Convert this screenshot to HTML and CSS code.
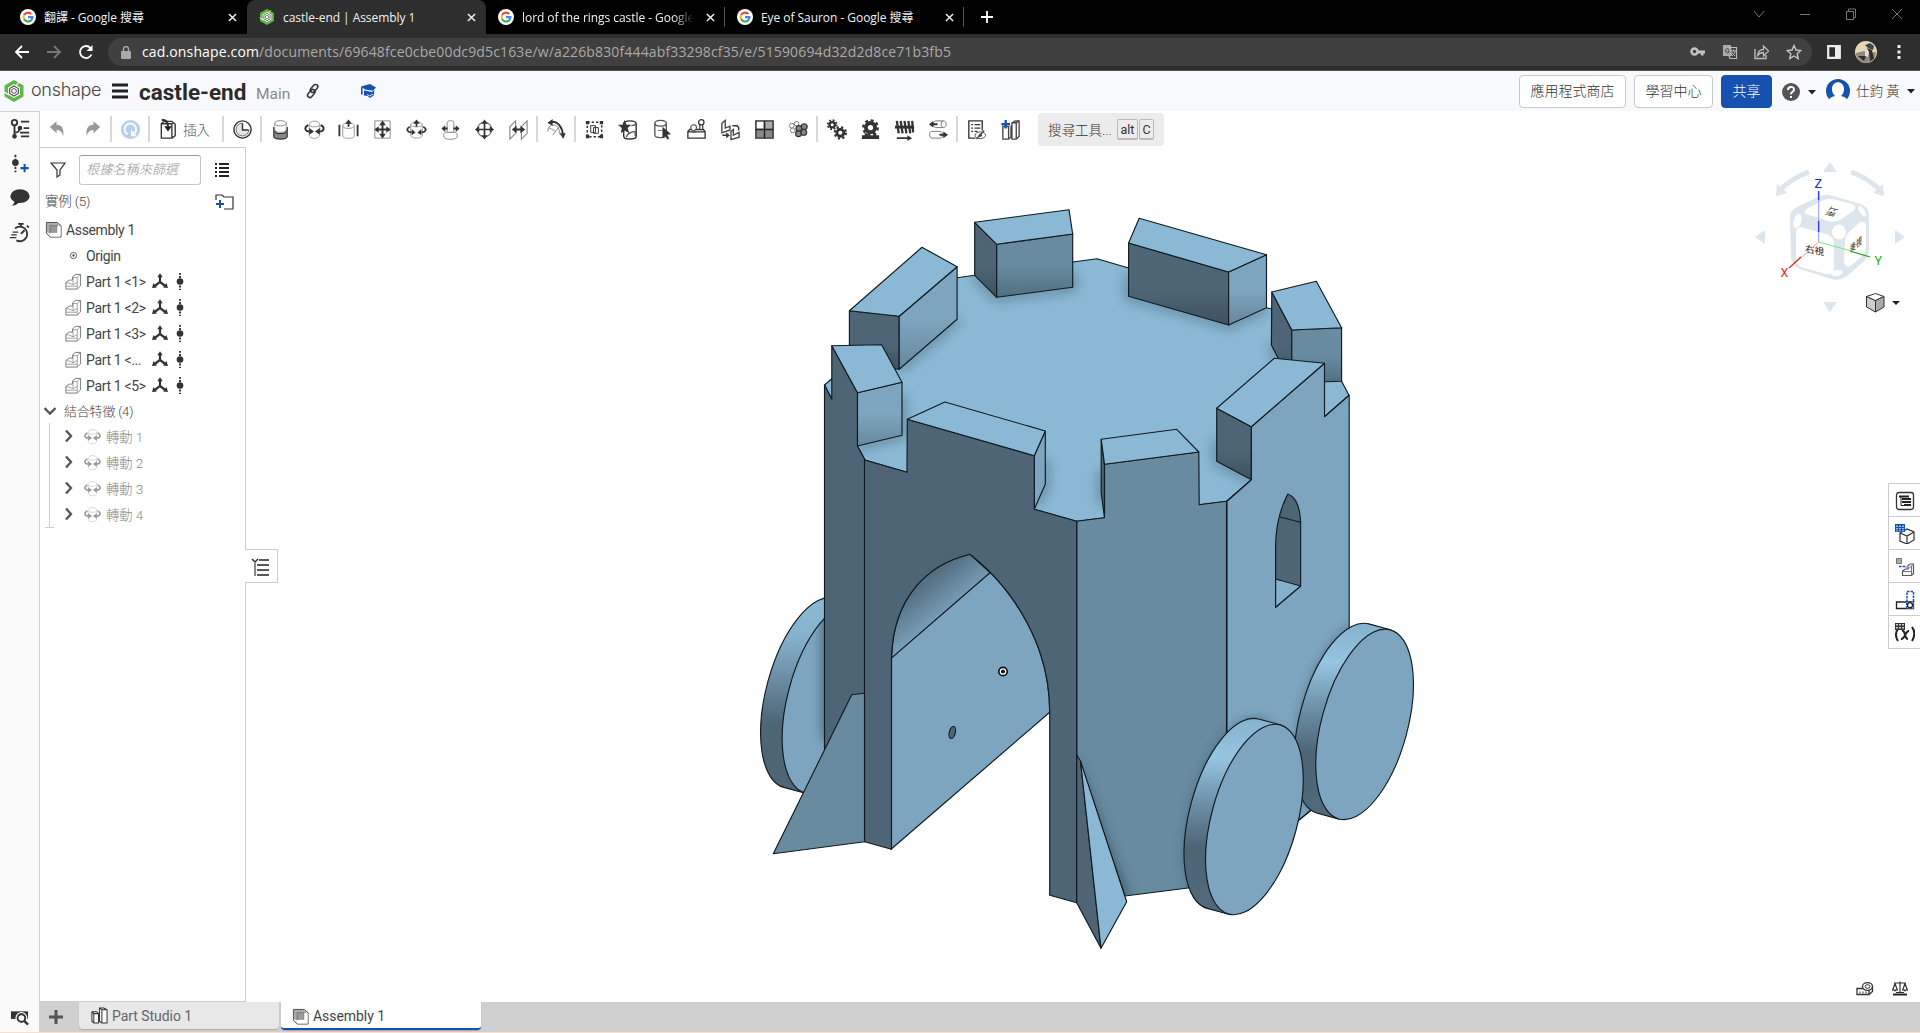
FILE: index.html
```html
<!DOCTYPE html>
<html lang="zh-Hant">
<head>
<meta charset="utf-8">
<title>castle-end | Assembly 1</title>
<link rel="stylesheet" href="styles.css">
</head>
<body>
<svg class="defs" width="0" height="0">
  <defs>
    <symbol id="google" viewBox="0 0 20 20"><circle cx="10" cy="10" r="10" fill="#fff"/><g fill="none" stroke-width="2.6"><path d="M14 6.2A5.6 5.6 0 0 0 5 7.6" stroke="#ea4335"/><path d="M5 7.6a5.6 5.6 0 0 0 0 4.8" stroke="#fbbc05"/><path d="M5 12.4a5.6 5.6 0 0 0 8.8 1.8" stroke="#34a853"/><path d="M13.8 14.2A5.5 5.5 0 0 0 15.6 10.2H10" stroke="#4285f4"/></g></symbol>
    <symbol id="hex" viewBox="0 0 20 22"><path d="M10 0l9.500 5.500v11L10 22 .5 16.500v-11z" fill="#5cb947"/><path d="M10 4l6 3.500v7L10 18l-6-3.500v-7z" fill="#fff"/><path d="M10 6l4.300 2.500v5L10 16l-4.300-2.500v-5z" fill="none" stroke="#555" stroke-width="1.200"/><path d="M10 8.500l2.200 1.200v2.600L10 13.500l-2.200-1.200V9.700z" fill="none" stroke="#555"/><path d="M0 12l5 3M15 2l-3 4" stroke="#fff" stroke-width="1.200"/></symbol>
    <symbol id="x" viewBox="0 0 10 10"><path d="M1 1l8 8M9 1L1 9" fill="none" stroke="currentColor" stroke-width="1.600"/></symbol>
    <symbol id="caret" viewBox="0 0 8 5"><path d="M0 0h8L4 4.500z" fill="#222"/></symbol>
    <symbol id="undo" viewBox="0 0 24 24"><path d="M4 9.500l7-6v3.500c6 0 8 4.500 7 12-1-4-3-6.500-7-6.500v3.500z" fill="#999"/></symbol>
    <symbol id="refresh" viewBox="0 0 24 24"><circle cx="12" cy="12" r="10" fill="#b8cfe8"/><path d="M9 17a6 6 0 1 1 6.500-.5" fill="none" stroke="#fff" stroke-width="2"/><path d="M12.500 12v7h6z" fill="#fff"/></symbol>
    <symbol id="insert" viewBox="0 0 24 24"><path d="M4.500 6h11v15h-11zM4.500 6l3-2.500h8l3.500 3v12L15.500 21M15.500 6l2-1" fill="none" stroke="#333" stroke-width="1.400"/><path d="M5 2c5 0 6.500 3 6.500 7" fill="none" stroke="#333" stroke-width="2.200"/><path d="M7.500 8.500h8L11.500 14z" fill="#222"/></symbol>
    <symbol id="clock" viewBox="0 0 24 24"><circle cx="12" cy="12" r="9" fill="#f2f2f2" stroke="#333" stroke-width="1.500"/><circle cx="12" cy="12" r="6.700" fill="#e4e4e4" stroke="#777"/><path d="M12 4v8.500h7.500A8 8 0 0 0 12 4z" fill="#fff"/><path d="M12 5.500v7h6.500" fill="none" stroke="#333" stroke-width="1.500"/></symbol>
    <symbol id="fasten" viewBox="0 0 24 24"><path d="M5 10v9c0 4 14 4 14 0v-9c-2 0-1 5-3 6h-8c-2-1-1-6-3-6z" fill="#888" stroke="#333" stroke-width="1.300"/><path d="M6 5v7c0 4 12 4 12 0V5" fill="#fff" stroke="#999"/><ellipse cx="12" cy="5.500" rx="6" ry="2.800" fill="#fff" stroke="#888"/></symbol>
    <symbol id="revolute" viewBox="0 0 24 24"><path d="M6.500 7c0-5 11-5 11 0v10.500c0 5-11 5-11 0z" fill="#fff" stroke="#999"/><path d="M6.500 7c0 3 11 3 11 0" fill="none" stroke="#999"/><path d="M5.500 7.500C.5 10 2 14 7 14M18.500 7.500c5 2.500 3.500 6.500-1.500 6.500" fill="none" stroke="#333" stroke-width="1.900"/><path d="M6.500 10.500v7l5-3.500zM17.500 10.500v7l-5-3.500z" fill="#333"/></symbol>
    <symbol id="slider" viewBox="0 0 24 24"><path d="M6 8v11c0 3 12 3 12 0V8" fill="#fff" stroke="#999"/><ellipse cx="12" cy="8" rx="6" ry="3" fill="#fff" stroke="#999"/><path d="M2.500 7v12M21.500 7v12M12 9V4" stroke="#333" stroke-width="1.900"/><path d="M8.500 6L12 1.500 15.500 6z" fill="#333"/></symbol>
    <symbol id="planar" viewBox="0 0 24 24"><path d="M4 3h16v18H4z" fill="#fff" stroke="#888"/><path d="M12 5v14M5 12h14" stroke="#333" stroke-width="2"/><path d="M8.500 7.500L12 2.500 15.500 7.500zM8.500 16.500l3.500 5 3.500-5zM8 8.500L3.500 12 8 15.500zM16 8.500l4.500 3.500-4.500 3.500z" fill="#333"/></symbol>
    <symbol id="cyl" viewBox="0 0 24 24"><path d="M6 7v11c0 4 12 4 12 0V7c0-4-12-4-12 0c0 3 12 3 12 0" fill="#fff" stroke="#999"/><path d="M12 9V4M5 9c-5 3-2 6 2 6M19 9c5 3 2 6-2 6" fill="none" stroke="#333" stroke-width="1.800"/><path d="M8.500 6L12 1.500 15.500 6zM7 11.500v6.500l4-3zM17 11.500v6.500l-4-3z" fill="#333"/></symbol>
    <symbol id="pin" viewBox="0 0 24 24"><path d="M8.500 5c0-3 7-3 7 0v10h-7z" fill="#fff" stroke="#888"/><path d="M5 17c0-2 3-2 3.500-2h7c.5 0 3.500 0 3.500 2v3c-2 3-12 3-14 0z" fill="#fff" stroke="#888"/><path d="M9 11H5M15 11h4" stroke="#333" stroke-width="2"/><path d="M6.500 7.500v7L2.500 11zM17.500 7.500v7l4-3.500z" fill="#333"/></symbol>
    <symbol id="ball" viewBox="0 0 24 24"><circle cx="12" cy="12" r="7.500" fill="#fff" stroke="#777" stroke-width="1.300"/><path d="M12 4v16M4 12h16" stroke="#333" stroke-width="1.800"/><path d="M8.500 6L12 1.500 15.500 6zM8.500 18l3.500 4.500 3.500-4.500zM6.500 8.500L2 12l4.500 3.500zM17.500 8.500L22 12l-4.500 3.500z" fill="#333"/></symbol>
    <symbol id="parallel" viewBox="0 0 24 24"><path d="M3 9l6-6v13l-6 6zM15 9l6-6v13l-6 6z" fill="#fff" stroke="#888" stroke-width="1.200"/><path d="M7 12h10" stroke="#333" stroke-width="2.200"/><path d="M10 8v8l-5-4zM14 8v8l5-4z" fill="#333"/></symbol>
    <symbol id="tangent" viewBox="0 0 24 24"><path d="M3 14c0-7 6-9 11-4l-6 8M14 10l2 8M4 10l7 4" fill="none" stroke="#888"/><path d="M6 4c8-1 12 6 13 14" fill="none" stroke="#333" stroke-width="1.900"/><path d="M8 1v7L2.500 5zM15.500 16h6L19 22z" fill="#333"/></symbol>
    <symbol id="group" viewBox="0 0 24 24"><path d="M4.500 4.500h15v15h-15z" fill="none" stroke="#333" stroke-width="1.600" stroke-dasharray="2.500 2"/><path d="M3 3h3.500v3.500H3zM17.500 3H21v3.500h-3.500zM3 17.500h3.500V21H3zM17.500 17.500H21V21h-3.500z" fill="#333"/><path d="M8 8h5v7H8zM11 10h5v6h-5z" fill="#fff" stroke="#333"/></symbol>
    <symbol id="snap" viewBox="0 0 24 24"><path d="M7 6v13c0 4 13 4 13 0V6c0-4-13-4-13 0" fill="#fff" stroke="#333" stroke-width="1.500"/><path d="M15 8c3 0 4-1 5-2M10 20c0-4 8-7 9-5v4" fill="none" stroke="#555" stroke-width="1.400"/><path d="M8 2l2 5h5l-4 3.500 2 5.500-5-3-4 3 1-5.500-4-3.500h5z" fill="#333"/></symbol>
    <symbol id="select" viewBox="0 0 24 24"><path d="M4 5.500v12c0 4 12 4 12 0v-12" fill="#fff" stroke="#555" stroke-width="1.400"/><ellipse cx="10" cy="5.500" rx="6" ry="3" fill="#fff" stroke="#555" stroke-width="1.400"/><path d="M7 13h6v5" fill="none" stroke="#777"/><path d="M12 9l9 8-4 .5 2 4-2 1-2-4-3 3z" fill="#333"/></symbol>
    <symbol id="mateconn" viewBox="0 0 24 24"><path d="M3 14l2-2h14l2 2v7H3zM3 14.500h18" fill="#fff" stroke="#333" stroke-width="1.400"/><circle cx="9" cy="10" r="3" fill="#fff" stroke="#555" stroke-width="1.200"/><path d="M7 13.500c0 2 5 2 5 0" fill="none" stroke="#555"/><path d="M15.500 6v6h3V6" fill="#fff" stroke="#333" stroke-width="1.200"/><circle cx="17" cy="4.500" r="2.800" fill="#fff" stroke="#333" stroke-width="1.300"/></symbol>
    <symbol id="pattern" viewBox="0 0 24 24"><path d="M3 5.500l3.500-3v8l5-2v4l-8.500 3zM12.500 14l2.500-2v6l6-3v5l-8.500 2.500z" fill="#fff" stroke="#444" stroke-width="1.400"/><path d="M14 8h5l1.500 2v3M3.500 18H8" fill="none" stroke="#333" stroke-width="1.500"/><path d="M7.500 15v6l4-3z" fill="#333"/></symbol>
    <symbol id="grid" viewBox="0 0 24 24"><path d="M3 3h18v18H3z" fill="#888" stroke="#333" stroke-width="1.500"/><path d="M4 4h7v7H4z" fill="#fff"/><path d="M13 4h7v7h-7z" fill="#aaa"/><path d="M12 3v18M3 12h18" stroke="#222" stroke-width="1.500"/></symbol>
    <symbol id="balls" viewBox="0 0 24 24"><g fill="#fff" stroke="#777"><circle cx="5" cy="8" r="2.500"/><circle cx="10" cy="6" r="2.500"/><circle cx="6" cy="13" r="2.500"/></g><g fill="#888" stroke="#333" stroke-width="1.300"><circle cx="12.500" cy="11" r="3"/><circle cx="18" cy="9" r="3"/><circle cx="12" cy="16.500" r="3"/><circle cx="17.500" cy="15" r="3"/></g></symbol>
    <symbol id="gears" viewBox="0 0 24 24"><g fill="none" stroke="#333"><circle cx="7.500" cy="7" r="2.800" stroke-width="2.400"/><circle cx="7.500" cy="7" r="4.600" stroke-width="2" stroke-dasharray="1.900 1.710"/><circle cx="16" cy="15.500" r="3.600" stroke-width="3"/><circle cx="16" cy="15.500" r="5.800" stroke-width="2.400" stroke-dasharray="2.300 2.255"/></g></symbol>
    <symbol id="rack" viewBox="0 0 24 24"><circle cx="12" cy="10" r="4.800" fill="#fff" stroke="#333" stroke-width="4"/><circle cx="12" cy="10" r="7.600" fill="none" stroke="#333" stroke-width="2.400" stroke-dasharray="3 2.970"/><path d="M3 18h3v-2h3v2h6v-2h3v2h3v4H3z" fill="#333"/></symbol>
    <symbol id="screw" viewBox="0 0 24 24"><path d="M2 9.500h20" stroke="#333" stroke-width="3"/><path d="M4 3l2 13M8 3l2 13M12 3l2 13M16 3l2 13M20 3l1 12" stroke="#333" stroke-width="2.400"/><path d="M4 21h12" stroke="#333" stroke-width="1.800"/><path d="M15 18l5 3-5 3z" fill="#333"/></symbol>
    <symbol id="linear" viewBox="0 0 24 24"><path d="M9 3h8c4 0 4 7 0 7H9c-3 0-3-7 0-7zM17 3c-3 0-3 7 0 7M5 14h9c3 0 3 7 0 7H5c-3 0-3-7 0-7z" fill="#fff" stroke="#777"/><path d="M5 6.500h6M13 17.500h5" stroke="#333" stroke-width="2"/><path d="M6.500 3v7L2 6.500zM17 14v7l5-3.500z" fill="#333"/></symbol>
    <symbol id="bom" viewBox="0 0 24 24"><path d="M11 21H4V3h14v10" fill="#fff" stroke="#333" stroke-width="1.400"/><path d="M6.500 7h2M10 7h6M6.500 10.500h2M10 10.500h6M6.500 14h2M10 14h3" stroke="#333" stroke-width="1.300"/><ellipse cx="16" cy="18" rx="5.500" ry="3.500" fill="#fff" stroke="#555"/><circle cx="16" cy="18" r="1.800" fill="#555"/><path d="M12 22l8-9" stroke="#444" stroke-width="1.400"/></symbol>
    <symbol id="addpart" viewBox="0 0 24 24"><path d="M4 9h6v13H4zM10 22l2.500-2V8M13.500 5l3.500-2h4v16l-3 3h-4.500zM13.500 5H18v17M18 5l3-2" fill="#fff" stroke="#444" stroke-width="1.400"/><path d="M7 2v9M2.500 6.500h9" stroke="#1651b0" stroke-width="2.400"/></symbol>
    <symbol id="tree" viewBox="0 0 24 24"><g fill="none" stroke="#333" stroke-width="2"><circle cx="6" cy="5" r="3"/><path d="M6 8v11M6 16c6 0 5-3 5-6M13 4h9M16 11h6M13 20h9M12 16h10"/></g><circle cx="6" cy="20" r="2.500" fill="#333"/><circle cx="12" cy="11" r="2.500" fill="#333"/></symbol>
    <symbol id="mdot" viewBox="0 0 8 20"><path d="M4 1v18" stroke="#333" stroke-width="2" stroke-dasharray="2 1.300"/><circle cx="4" cy="10" r="3.500" fill="#333"/></symbol>
    <symbol id="asm" viewBox="0 0 18 18"><path d="M1.500 1.500h11.500l4 3.500v12H5.500l-4-4z" fill="#eee" stroke="#444"/><path d="M2 2h10.500l3.500 3H6v8L2 12z" fill="#aaa"/><path d="M5.500 5h7.500v7.500H5.500z" fill="#999" stroke="#666" stroke-width=".8"/><path d="M13 5.500h3.500v11H6v-4h7z" fill="#fff"/></symbol>
    <symbol id="part" viewBox="0 0 18 18"><path d="M1 10l3.500-2.500H8V4l3-2.500h5.500v12L13 17H1z" fill="#fff" stroke="#777"/><path d="M1 10.500h3l4.500 2V4.500l4.500 .5 3.500-3.500M13 5v12M1 14l12 0M8.500 12.500l4.500-2.500" fill="none" stroke="#888" stroke-width=".8"/></symbol>
    <symbol id="axes" viewBox="0 0 16 16"><path d="M8 2v7L2 13.500M8 9l6 4.500" fill="none" stroke="#333" stroke-width="2.200"/><path d="M5.300 4.200L8 .3 10.700 4.200zM0 15l1.500-5 3.500 4.500zM16 15l-1.500-5-3.500 4.500z" fill="#333"/></symbol>
    <symbol id="chev" viewBox="0 0 12 12"><path d="M3 .5L8 6l-5 5.500" fill="none" stroke="#555" stroke-width="2.300"/></symbol>
    <symbol id="studio" viewBox="0 0 18 18"><path d="M1 5h5l2 2v10H3l-2-2zM1 5l2 2h5M3 7v10M9 1h4.500L17 3v14h-5.500L9 15zM9 1l2.500 2H17M11.500 3v14" fill="#fff" stroke="#333" stroke-width="1.100"/></symbol>
  </defs>
</svg>

<div class="tabstrip">
  <div class="tab"><svg class="fav"><use href="#google"/></svg><span>翻譯 - Google 搜尋</span><svg class="close"><use href="#x"/></svg></div>
  <div class="tab active"><svg class="fav"><use href="#hex"/></svg><span>castle-end | Assembly 1</span><svg class="close"><use href="#x"/></svg></div>
  <div class="tab ruled"><svg class="fav"><use href="#google"/></svg><span class="fade">lord of the rings castle - Google</span><svg class="close"><use href="#x"/></svg></div>
  <div class="tab ruled"><svg class="fav"><use href="#google"/></svg><span>Eye of Sauron - Google 搜尋</span><svg class="close"><use href="#x"/></svg></div>
  <svg class="newtab" viewBox="0 0 12 12"><path d="M6 0v12M0 6h12" stroke="#fff" stroke-width="1.800"/></svg>
  <div class="winctl">
    <svg viewBox="0 0 12 12"><path d="M1 3l5 6 5-6"/></svg>
    <svg viewBox="0 0 12 12"><path d="M1 6.500h10"/></svg>
    <svg viewBox="0 0 12 12"><path d="M1.500 3.500h7v8h-7zM3.500 3V1h7v8.500H9"/></svg>
    <svg viewBox="0 0 12 12"><path d="M1 1l10 10M11 1L1 11"/></svg>
  </div>
</div>

<div class="navbar">
  <svg class="nav" viewBox="0 0 16 16"><path d="M15 8H2M8 2L2 8l6 6" stroke="#fff"/></svg>
  <svg class="nav" viewBox="0 0 16 16"><path d="M1 8h13M8 2l6 6-6 6" stroke="#777"/></svg>
  <svg class="nav" viewBox="0 0 16 16"><path d="M13.500 10.500A6 6 0 1 1 12.500 4" stroke="#fff"/><path d="M14.500 1v6h-6z" fill="#fff" stroke="none"/></svg>
  <div class="omni">
    <svg width="10" height="13" viewBox="0 0 10 13"><rect y="5" width="10" height="8" rx="1" fill="#aaa"/><path d="M2.500 5V3a2.500 2.500 0 0 1 5 0v2" fill="none" stroke="#aaa" stroke-width="1.400"/></svg>
    <span class="url"><b>cad.onshape.com</b>/documents/69648fce0cbe00dc9d5c163e/w/a226b830f444abf33298cf35/e/51590694d32d2d8ce71b3fb5</span>
    <div class="omniicons">
      <svg viewBox="0 0 16 16"><circle cx="4.500" cy="7.500" r="3" fill="none" stroke="#c4c4c4" stroke-width="2.400"/><path d="M8 6.500h7v3h-1.500v2h-2.500v-2H8z" fill="#c4c4c4"/></svg>
      <svg viewBox="0 0 16 16"><path d="M1 1h8l1 11H1z" fill="#aaa"/><path d="M6 3.500h8.500v11H8l-1-2.500" fill="none" stroke="#bbb" stroke-width="1.200"/><path d="M7 5.500A2 2 0 1 0 7 8V7H5.500" fill="none" stroke="#444"/><path d="M9 7h5M11.500 5.500V7M13 7c-.5 3-2 4-3 5M10 9l3 3" stroke="#bbb" fill="none"/></svg>
      <svg viewBox="0 0 16 16"><path d="M1 5v9.500h11V11" fill="none" stroke="#bbb" stroke-width="1.400"/><path d="M3.500 11.500C4 7 7 5.500 9.500 5.500V2l5 5-5 5V8.500c-3 0-4.500 1-6 3z" fill="none" stroke="#bbb" stroke-width="1.300"/></svg>
      <svg viewBox="0 0 16 16"><path d="M8 1.500l2 4.500 4.800.5-3.600 3.200 1 4.800L8 12l-4.200 2.500 1-4.800L1.200 6.500 6 6z" fill="none" stroke="#c4c4c4" stroke-width="1.400"/></svg>
    </div>
  </div>
  <svg class="side" viewBox="0 0 14 14"><path d="M1.200 1.200h11.600v11.600H1.200z" fill="none" stroke="#eee" stroke-width="2.200"/><path d="M8 1h5v12H8z" fill="#eee"/></svg>
  <svg class="face" viewBox="0 0 22 22"><circle cx="11" cy="11" r="11" fill="#e8d7b4"/><path d="M1 12l8-2 5 2 7-1c0 6-4 11-10 11S1 17 1 12z" fill="#8c8a84"/><path d="M10 4l5-2 4 3-1 4-5-2z" fill="#37474b"/><path d="M12 7l5 2 2 9-4 2-1-9zM3 15h8l-2 5z" fill="#3a2a28"/><path d="M10 10l4 1-1 5-3-1z" fill="#ddd"/></svg>
  <svg class="dots" viewBox="0 0 4 16"><path d="M.5 1h3v3h-3zM.5 6.500h3v3h-3zM.5 12h3v3h-3z" fill="#eee"/></svg>
</div>

<header class="header">
  <svg class="logo"><use href="#hex"/></svg>
  <span class="brand">onshape</span>
  <svg class="burger" viewBox="0 0 16 16"><path d="M0 2h16M0 8h16M0 14h16" stroke="#222" stroke-width="2.800"/></svg>
  <h1>castle-end</h1><span class="ws">Main</span>
  <svg class="link" viewBox="0 0 16 16"><g fill="none" stroke="#333" stroke-width="1.500"><rect x="6.800" y=".8" width="4.600" height="9" rx="2.300" transform="rotate(40 9 5.300)"/><rect x="4" y="6" width="4.600" height="9" rx="2.300" transform="rotate(40 6.300 10.500)"/></g></svg>
  <svg class="cap" viewBox="0 0 16 16"><path d="M1 3.500L10 1l6 3.500-3 3.300-8-1.300z" fill="#1651b0"/><path d="M1.800 4v7.500" stroke="#1651b0" stroke-width="1.600"/><path d="M4 7.500l8 1.400 2.500-2-.8 5.600L10 15l-2.500-2L4 12.500z" fill="#1651b0"/><path d="M7 11.500l2.500 1.500 3.500-2" fill="none" stroke="#f8f9fc" stroke-width=".9"/></svg>
  <div class="actions">
    <button class="btn store">應用程式商店</button>
    <button class="btn learn">學習中心</button>
    <button class="btn share">共享</button>
    <svg class="help" viewBox="0 0 18 18"><circle cx="9" cy="9" r="9" fill="#555"/><path d="M6 7c0-4 6-4 6-.5C12 9 9 8.500 9 11.200" fill="none" stroke="#fff" stroke-width="2"/><path d="M8 13h2v2H8z" fill="#fff"/></svg>
    <svg class="caret"><use href="#caret"/></svg>
    <svg class="user" viewBox="0 0 24 24"><circle cx="12" cy="12" r="12" fill="#1651b0"/><path d="M6 10c0-9 12-9 12 0 0 4-2 6-3 7 4 1 6 2 6 5-4 3-14 3-18 0 0-3 2-4 6-5-1-1-3-3-3-7z" fill="#fff"/></svg>
    <span class="uname">仕鈞 黃</span>
    <svg class="caret last"><use href="#caret"/></svg>
  </div>
</header>

<div class="workspace">
  <nav class="rail">
    <svg class="i22"><use href="#tree"/></svg>
    <svg class="i22" viewBox="0 0 24 24"><path d="M7 2v19" stroke="#333" stroke-width="2" stroke-dasharray="2.500 1.800"/><circle cx="7" cy="10.500" r="3.600" fill="#333"/><path d="M17 12v9M12.500 16.500h9" stroke="#1651b0" stroke-width="2.200"/></svg>
    <svg class="i22" viewBox="0 0 24 24"><ellipse cx="12" cy="10" rx="10.500" ry="7.500" fill="#333"/><path d="M3 20c3-1 3-4 3-6l5 3c-2 2-5 4-8 3z" fill="#333"/></svg>
    <svg class="i22" viewBox="0 0 24 24"><path d="M6.500 7A8 8 0 1 1 8 20M10 2h6M13 2v3M19.500 4l2 2M13 13l4-4" fill="none" stroke="#333" stroke-width="2"/><path d="M4 11h6M2.500 14h6M1 17h7" stroke="#333" stroke-width="1.200"/></svg>
    <svg class="search" viewBox="0 0 20 18"><path d="M1 2h18v8H1z" fill="#333"/><circle cx="12" cy="9" r="5.500" fill="#333" stroke="#fff" stroke-width="1.500"/><circle cx="12" cy="9" r="4" fill="#fff" stroke="#333" stroke-width="2"/><path d="M15 12l4 4" stroke="#333" stroke-width="2.400"/></svg>
  </nav>
  <div class="stage">
    <div class="tools">
      <i><svg><use href="#undo"/></svg></i><i class="flip"><svg><use href="#undo"/></svg></i><b></b>
      <i><svg><use href="#refresh"/></svg></i><b></b>
      <i class="ins"><svg><use href="#insert"/></svg><span>插入</span></i><b></b>
      <i><svg><use href="#clock"/></svg></i><b></b>
      <i><svg><use href="#fasten"/></svg></i><i><svg><use href="#revolute"/></svg></i><i><svg><use href="#slider"/></svg></i><i><svg><use href="#planar"/></svg></i><i><svg><use href="#cyl"/></svg></i><i><svg><use href="#pin"/></svg></i><i><svg><use href="#ball"/></svg></i><i><svg><use href="#parallel"/></svg></i><b></b>
      <i><svg><use href="#tangent"/></svg></i><b></b>
      <i><svg><use href="#group"/></svg></i><i><svg><use href="#snap"/></svg></i><i><svg><use href="#select"/></svg></i><i><svg><use href="#mateconn"/></svg></i><i><svg><use href="#pattern"/></svg></i><i><svg><use href="#grid"/></svg></i><i><svg><use href="#balls"/></svg></i><b></b>
      <i><svg><use href="#gears"/></svg></i><i><svg><use href="#rack"/></svg></i><i><svg><use href="#screw"/></svg></i><i><svg><use href="#linear"/></svg></i><b></b>
      <i><svg><use href="#bom"/></svg></i><i><svg><use href="#addpart"/></svg></i>
      <div class="find"><span>搜尋工具...</span><kbd>alt</kbd><kbd>C</kbd></div>
    </div>
    <div class="middle">
      <aside class="panel">
        <div class="filter">
          <svg width="16" height="16" viewBox="0 0 16 16"><path d="M1 1h14l-5 7v5l-3 2V8z" fill="none" stroke="#333" stroke-width="1.200"/></svg>
          <div class="field">根據名稱來篩選</div>
          <svg width="14" height="14" viewBox="0 0 14 14"><path d="M0 1h2M4 1h10M0 5h2M4 5h10M0 9h2M4 9h10M0 13h2M4 13h10" stroke="#222" stroke-width="1.800"/></svg>
        </div>
        <div class="row head"><span>實例 (5)</span><svg width="19" height="16" viewBox="0 0 19 16"><path d="M1 6V1h6l2 2h9v12H9" fill="none" stroke="#333" stroke-width="1.200"/><path d="M5 6v8M1 10h8" stroke="#1651b0" stroke-width="2"/></svg></div>
        <div class="row asm"><svg class="i17"><use href="#asm"/></svg><span>Assembly 1</span></div>
        <div class="row lv"><svg class="i17" viewBox="0 0 18 18"><circle cx="9" cy="9" r="3.300" fill="none" stroke="#555"/><circle cx="9" cy="9" r="1.200" fill="#444"/></svg><span>Origin</span></div>
        <div class="row lv"><svg class="i17"><use href="#part"/></svg><span>Part 1 &lt;1&gt;</span><svg class="ax"><use href="#axes"/></svg><svg class="md"><use href="#mdot"/></svg></div>
        <div class="row lv"><svg class="i17"><use href="#part"/></svg><span>Part 1 &lt;2&gt;</span><svg class="ax"><use href="#axes"/></svg><svg class="md"><use href="#mdot"/></svg></div>
        <div class="row lv"><svg class="i17"><use href="#part"/></svg><span>Part 1 &lt;3&gt;</span><svg class="ax"><use href="#axes"/></svg><svg class="md"><use href="#mdot"/></svg></div>
        <div class="row lv"><svg class="i17"><use href="#part"/></svg><span>Part 1 &lt;...</span><svg class="ax"><use href="#axes"/></svg><svg class="md"><use href="#mdot"/></svg></div>
        <div class="row lv"><svg class="i17"><use href="#part"/></svg><span>Part 1 &lt;5&gt;</span><svg class="ax"><use href="#axes"/></svg><svg class="md"><use href="#mdot"/></svg></div>
        <div class="row mates"><svg class="down" viewBox="0 0 12 12"><path d="M.5 3L6 8.500 11.500 3" fill="none" stroke="#555" stroke-width="2.300"/></svg><span>結合特徵 (4)</span></div>
        <div class="kids">
          <div class="row"><svg class="chev"><use href="#chev"/></svg><svg class="rv"><use href="#revolute"/></svg><span>轉動 1</span></div>
          <div class="row"><svg class="chev"><use href="#chev"/></svg><svg class="rv"><use href="#revolute"/></svg><span>轉動 2</span></div>
          <div class="row"><svg class="chev"><use href="#chev"/></svg><svg class="rv"><use href="#revolute"/></svg><span>轉動 3</span></div>
          <div class="row"><svg class="chev"><use href="#chev"/></svg><svg class="rv"><use href="#revolute"/></svg><span>轉動 4</span></div>
        </div>
      </aside>
      <main class="canvas">
        <svg class="model" viewBox="246 147 1674 855">
          <defs>
            <linearGradient id="rim" x1="0" y1="0" x2="0" y2="1"><stop offset="0" stop-color="#84b1cc"/><stop offset=".2" stop-color="#96c5e2"/><stop offset=".42" stop-color="#6d93aa"/><stop offset=".66" stop-color="#4d6575"/><stop offset="1" stop-color="#506a7b"/></linearGradient>
            <linearGradient id="rimL" x1="0" y1="0" x2="0" y2="1"><stop offset="0" stop-color="#8bb9d5"/><stop offset=".2" stop-color="#86b2cd"/><stop offset=".65" stop-color="#4d6575"/><stop offset="1" stop-color="#4d6575"/></linearGradient>
            <linearGradient id="vault" gradientUnits="userSpaceOnUse" x1="922" y1="585" x2="948" y2="618"><stop offset="0" stop-color="#557083"/><stop offset="1" stop-color="#7ea5bf"/></linearGradient>
            <linearGradient id="fd" x1="0" y1="0" x2="0" y2="1"><stop offset=".6" stop-color="#4d6575"/><stop offset="1" stop-color="#3e515e"/></linearGradient>
            <linearGradient id="fm" x1="0" y1="0" x2="0" y2="1"><stop offset=".5" stop-color="#688ba0"/><stop offset="1" stop-color="#526e80"/></linearGradient>
            <linearGradient id="fr" x1="0" y1="0" x2="0" y2="1"><stop offset=".5" stop-color="#7ea5bf"/><stop offset="1" stop-color="#67879c"/></linearGradient>
            <filter id="soft" filterUnits="userSpaceOnUse" x="740" y="180" width="700" height="780"><feGaussianBlur stdDeviation="6"/></filter>
            <clipPath id="roofclip"><path d="M824.500 385L831.800 378.700 899 300 957 277.700 974.700 275.300 1072.700 262 1097 258.700 1128.600 268 1266.500 307.700 1341.600 381.300 1349 395.300 1324.500 416.700 1251.400 479.700 1226.500 501.300 1199 504.700 1104.500 517.700 1076.700 521.300 1034.300 509.300 907 472.300 865 460 857.500 446 831.800 399.300z"/></clipPath>
            <clipPath id="faces"><path d="M1076.700 521L1104 517.700 1198.800 452 1227 501.300 1251 427 1324 363 1324.500 416.700 1349 395.300V780L1297 821 1188 888 1125 896 1076.700 755z"/></clipPath>
            <clipPath id="leftface"><path d="M824 618V750L803 791C775 790 776 690 824 618z"/></clipPath>
          </defs>
          <g stroke="#111a20" stroke-width="1.150" stroke-linejoin="round">
            <!-- left wheel -->
            <path d="M856.700 603.800L835.200 598A43 98 15.200 0 0 783.800 787.400L805.300 793.200z" fill="url(#rimL)"/>
            <ellipse cx="831" cy="698.500" rx="43" ry="98" transform="rotate(15.200 831 698.500)" fill="#7ea5bf"/>
            <g clip-path="url(#leftface)"><path d="M823 610h12v130h-12z" fill="#22343f" opacity=".6" stroke="none" filter="url(#soft)"/></g>
            <!-- roof and back battlements -->
            <path d="M824.500 385L831.800 378.700 899 300 957 277.700 974.700 275.300 1072.700 262 1097 258.700 1128.600 268 1266.500 307.700 1271.800 309 1341.600 381.300 1349 395.300 1324.500 416.700 1251.400 479.700 1226.500 501.300 1199 504.700 1104.500 517.700 1076.700 521.300 1034.300 509.300 907 472.300 865 460 857.500 446 831.800 399.300z" fill="#8bb9d5"/>
            <g clip-path="url(#roofclip)"><path d="M899 369L957 319M974.700 275.300L996.700 297.300 1072.700 287.300V272M1128.600 275V296.300L1228.600 325 1266.500 307.700M1271 345L1280 362M902 395V435L857 446M1045 460V484L1036 505M1102 505V470M1216.700 440V461L1251 480" fill="none" stroke="#263844" stroke-width="7" opacity=".45" filter="url(#soft)"/></g>
            <path d="M974.700 222.300L996.700 244.300V297.300L974.700 275.300z" fill="url(#fd)"/>
            <path d="M996.700 244.300L1072.700 234V287.300L996.700 297.300z" fill="url(#fm)"/>
            <path d="M974.700 222.300L1069 209.700 1072.700 234 996.700 244.300z" fill="#8bb9d5"/>
            <path d="M1128.600 243L1228.600 272V325L1128.600 296.300z" fill="url(#fd)"/>
            <path d="M1228.600 272L1266.500 254.700V307.700L1228.600 325z" fill="url(#fr)"/>
            <path d="M1139.200 218.300L1266.500 254.700 1228.600 272 1128.600 243z" fill="#8bb9d5"/>
            <path d="M849.400 310.700L899.200 316.300V369.300L849.400 364z" fill="url(#fd)"/>
            <path d="M899.200 316.300L957.100 266.700V319.300L899.200 369.300z" fill="url(#fr)"/>
            <path d="M849.400 310.700L922 247.300 957.100 266.700 899.200 316.300z" fill="#8bb9d5"/>
            <path d="M1271.800 292L1291.800 330V385L1271.400 345z" fill="url(#fd)"/>
            <path d="M1291.800 330L1341.600 327.700V381.300L1291.800 383z" fill="url(#fm)"/>
            <path d="M1271.800 292L1316.300 281.300 1341.600 327.700 1291.800 330z" fill="#8bb9d5"/>
            <!-- outer walls -->
            <path d="M831.800 345.700L857.500 392.700V446L865 460V755H824.500V385L831.800 399.300z" fill="#4d6575"/>
            <path d="M857.500 392.700L902 382.300V435.300L857.500 446z" fill="url(#fr)"/>
            <path d="M831.800 345.700L881.600 344.700 902 382.300 857.500 392.700z" fill="#8bb9d5"/>
            <path d="M1034.300 455.700L1045.300 431V484.300L1034.300 509.300z" fill="#7ea5bf"/>
            <path d="M1104.500 464.300L1101.200 439.300V492.700L1104.500 517.700z" fill="#4d6575"/>
            <path d="M1216.700 408.300L1251.400 426.700V479.700L1216.700 461.300z" fill="url(#fd)"/>
            <path d="M1104.500 464.300L1198.800 452 1199.200 504.700 1226.500 501.300V884L1188 888 1125 896 1076.700 755V521.300L1104.500 517.700z" fill="#688ba0"/>
            <path d="M1251.400 426.700L1324.500 363.300V416.700L1349.200 395.300V780L1297.700 821 1227 830V501.300L1251.400 479.700z" fill="#7ea5bf"/>
            <path d="M1274.300 358.300L1324.500 363.300 1251.400 426.700 1216.700 408.300z" fill="#8bb9d5"/>
            <path d="M1101.200 439.300L1176.700 429.300 1198.800 452 1104.500 464.300z" fill="#8bb9d5"/>
            <path d="M1297.700 821L1311 810V780H1297z" fill="#7ea5bf"/>
            <!-- wheel and spike contact shadows -->
            <g clip-path="url(#faces)" stroke="none" fill="#22343f"><g opacity=".5" filter="url(#soft)"><ellipse cx="1235" cy="814" rx="43" ry="98" transform="rotate(15.200 1235 814)"/><ellipse cx="1345" cy="718" rx="43" ry="98" transform="rotate(15.200 1345 718)"/><path d="M1077 758L1131 902H1080z"/></g></g>
            <!-- gate -->
            <path d="M891.500 658C893 600 925 565 970 554.300C1015 590 1050 647 1049.700 712.300L891 849.300z" fill="#7ea5bf"/>
            <path d="M891.500 658C893 600 925 565 970 554.300L990 572.700z" fill="url(#vault)"/>
            <path fill-rule="evenodd" d="M907.300 419.300L1034.300 455.700V509.300L1076.700 521.300V902.700L1049.700 895.300V712.300C1050 647 1015 590 970 554.300C925 565 893 600 891.500 658V849.300L864.500 841.700V460L907 472.300z" fill="#4d6575"/>
            <path d="M907.300 419.300L944.900 402 1045.300 431 1034.300 455.700z" fill="#8bb9d5"/>
            <ellipse cx="952.300" cy="732.500" rx="3" ry="6.200" transform="rotate(15 952.300 732.500)" fill="#4d6575"/>
            <!-- window -->
            <path d="M1275.600 607.300V545C1276 524 1281 507 1287.800 494C1296 497 1300 508 1300.600 522V586z" fill="#4d6575"/>
            <path d="M1280 517L1300.400 522.300" fill="none"/>
            <path d="M1275.600 579L1300.600 586 1275.600 607.300z" fill="#84b0cb"/>
            <!-- spikes -->
            <path d="M851.700 694.700L864.500 693.300V841.700L773.300 853.700z" fill="#688ba0"/>
            <path d="M1076.700 755L1080.500 761 1101 948.300 1076.700 902.700z" fill="#4d6575"/>
            <path d="M1080.500 761L1126.700 901.700 1101 948.300z" fill="#8bb9d5"/>
            <!-- right wheels -->
            <path d="M1390.300 629.700L1368.800 623.900A43 98 15.200 0 0 1317.400 813.300L1338.900 819.100z" fill="url(#rim)"/>
            <ellipse cx="1364.600" cy="724.400" rx="43" ry="98" transform="rotate(15.200 1364.600 724.400)" fill="#7ea5bf"/>
            <path d="M1280.100 724.800L1258.600 719A43 98 15.200 0 0 1207.200 908.400L1228.700 914.200z" fill="url(#rim)"/>
            <ellipse cx="1254.400" cy="819.500" rx="43" ry="98" transform="rotate(15.200 1254.400 819.500)" fill="#7ea5bf"/>
            <!-- origin -->
            <circle cx="1003" cy="671.500" r="4.200" fill="#fff" stroke="#111" stroke-width="1.700"/><circle cx="1003" cy="671.500" r="1.500" fill="#111"/>
          </g>
        </svg>
        <svg class="cube" viewBox="0 0 200 180">
          <g fill="#dde6ed"><path d="M110 12l7 10h-14zM110 162l7-10h-14zM35 87l10-7v14zM185 87l-10-7v14z"/><path d="M56 46l1-12 10 9z"/><path d="M164 46l-1-12-10 9z"/></g>
          <g fill="none" stroke="#dde6ed" stroke-width="5"><path d="M60 40Q72 28 89 22M160 40Q148 28 131 22"/></g>
          <path d="M70 66Q70 61 77 57L100 46Q106 44 113 46L141 54Q149 57 149 66V101Q148 108 142 113L126 127Q118 131 111 129L80 119Q73 116 71 108z" fill="#dde6ed"/>
          <path d="M86 64Q82 62 88 58L104 50Q108 48 113 49L132 54Q138 57 133 61L120 70Q115 73 108 71z" fill="#fff"/>
          <path d="M76 84Q76 76 84 78L106 84Q114 86 114 94V117Q114 126 106 124L84 118Q76 116 76 108z" fill="#fff"/>
          <path d="M125 92Q125 86 130 81L139 73Q146 69 146 78V97Q146 103 140 108L132 115Q125 120 124 111z" fill="#fff"/>
          <ellipse cx="119" cy="82" rx="7" ry="7.500" fill="#fff"/><ellipse cx="77.500" cy="71" rx="3.800" ry="7.500" transform="rotate(15 77.500 71)" fill="#fff"/><ellipse cx="142" cy="61" rx="2.500" ry="6" transform="rotate(-35 142 61)" fill="#fff"/><ellipse cx="117" cy="123" rx="6" ry="3" transform="rotate(-10 117 123)" fill="#fff"/>
          <g class="facetext"><text transform="matrix(1 .18 0 1 85 102)">右視</text><text transform="matrix(.62 -.5 0 1.050 130 103)">後視</text><text transform="matrix(-.35 .5 -1 -.2 112 56)">上視</text></g>
          <path d="M98.600 42v50" stroke="#aaf" stroke-width="1.300"/><path d="M98.600 41v9M98.600 71v11" stroke="#33e" stroke-width="1.300"/>
          <path d="M98.600 92l33 9" stroke="#8d8"/><path d="M130 101l20 6" stroke="#2a2" stroke-width="1.300"/>
          <path d="M98.600 92l-18 16" stroke="#f99"/><path d="M81 107l-12 11" stroke="#e22" stroke-width="1.300"/>
          <text class="ax3" x="94.500" y="38" fill="#22e">Z</text><text class="ax3" x="60.500" y="127" fill="#e22">X</text><text class="ax3" x="154.500" y="115" fill="#2a2">Y</text>
          <g stroke="#333" stroke-linejoin="round"><path d="M146.500 146.500l9 4V162l-9-5z" fill="#ccc"/><path d="M146.500 146.500l9-3 8.500 3-8.500 4z" fill="#fff"/><path d="M155.500 150.500l8.500-4V157l-8.500 5z" fill="#aaa"/></g>
          <path d="M172 151h8l-4 4z" fill="#222"/>
        </svg>
        <div class="flap"><svg width="19" height="18" viewBox="0 0 19 18"><path d="M1 1l3 3 3-3" fill="none" stroke="#333" stroke-width="1.500"/><path d="M4 5v13" stroke="#888" stroke-width="2"/><path d="M8 2h10M6 7h12M6 12h12M6 17h12" stroke="#222" stroke-width="1.300"/></svg></div>
        <div class="dock">
          <div><svg viewBox="0 0 20 20"><rect x="1.500" y="1.500" width="17" height="17" rx="2.500" fill="#fff" stroke="#333" stroke-width="1.300"/><path d="M4 5.500h10M7 8h9M7 11h9M9 14h7" stroke="#222" stroke-width="1.800"/><path d="M6 6v8.500h3" fill="none" stroke="#222"/></svg></div>
          <div><svg viewBox="0 0 20 20"><path d="M5 9l7-4 7 3v8l-7 4-7-3zM5 9l7 3 7-4M12 12v8" fill="#fff" stroke="#333" stroke-width="1.200"/><path d="M0 0h10v8H0z" fill="#1651b0"/><path d="M1 1.500h2v1.500H1zM4 1.500h2v1.500H4zM7 1.500h2v1.500H7zM1 4h2v1.300H1zM4 4h2v1.300H4zM7 4h2v1.300H7zM1 6.200h2v1H1zM4 6.200h2v1H4zM7 6.200h2v1H7z" fill="#9be"/></svg></div>
          <div><svg viewBox="0 0 20 20"><path d="M1.500 1.500h5v5h-5z" fill="#aaa" stroke="#777"/><path d="M4 9.500h7v1" fill="none" stroke="#1651b0" stroke-width="1.500" stroke-dasharray="2.500 1"/><path d="M7.500 14l3-2H13V8.500l2-1.500h3.500v9.500l-2 2h-9z" fill="#fff" stroke="#555" stroke-width="1.200"/><path d="M7.500 14.500l9 0M13 12l3.500-3 2-2M16.500 9v9.500" fill="none" stroke="#777"/></svg></div>
          <div><svg viewBox="0 0 20 20"><path d="M12 12V1.500h6.500V12" fill="none" stroke="#1651b0" stroke-width="1.500" stroke-dasharray="2.500 1"/><path d="M1.500 12h17v6.500h-17z" fill="#fff" stroke="#222" stroke-width="1.300"/><path d="M11.500 12h7v6.500h-7z" fill="#cde" stroke="#1651b0" stroke-dasharray="2 1"/><circle cx="15" cy="15.200" r="2.500" fill="#fff" stroke="#222" stroke-width="1.300"/></svg></div>
          <div><svg viewBox="0 0 20 20"><path d="M3 6c-3 4-2.500 8 0 12M17 4c3 4 3 9 0 14M7 8c4-1 2 8 6 8M14 8c-4 0-4 9-8 8" fill="none" stroke="#222" stroke-width="2"/><path d="M0 0h10v7H0z" fill="#333"/><path d="M1 1h2v1.500H1zM4 1h2v1.500H4zM7 1h2v1.500H7zM1 4h2v1.500H1zM4 4h2v1.500H4zM7 4h2v1.500H7z" fill="#ccc"/></svg></div>
        </div>
        <div class="measure">
          <svg viewBox="0 0 18 14"><path d="M1 7h12v6H1z" fill="#fff" stroke="#333" stroke-width="1.300"/><path d="M4 10v2M7 10v2M10 10v2" stroke="#333"/><ellipse cx="11.500" cy="5" rx="5" ry="3.800" fill="#fff" stroke="#333" stroke-width="1.300"/><ellipse cx="11.500" cy="5" rx="2.500" ry="1.800" fill="none" stroke="#333"/><path d="M16.500 5v5l-3.500 3" fill="none" stroke="#333" stroke-width="1.300"/></svg>
          <svg viewBox="0 0 18 14"><path d="M2 13h14" stroke="#222" stroke-width="2"/><path d="M9 0v11M3 1.500h12M4 2L1.500 9M4 2l2.500 7M14 2l-2.500 7M14 2l2.500 7M5 11h8" stroke="#333" stroke-width="1.200"/><path d="M1 8h6l-3 2zM11 8h6l-3 2z" fill="#333"/></svg>
        </div>
      </main>
    </div>
    <footer class="sheets">
      <svg class="add" viewBox="0 0 16 16"><path d="M8 1v14M1 8h14" stroke="#555" stroke-width="3"/></svg>
      <div class="sheet"><svg class="i17"><use href="#studio"/></svg><span>Part Studio 1</span></div>
      <div class="sheet on"><svg class="i17"><use href="#asm"/></svg><span>Assembly 1</span></div>
    </footer>
  </div>
</div>
</body>
</html>
```

FILE: styles.css
```css
* { box-sizing: border-box; }
html, body { height: 100%; }
body {
  margin: 0;
  overflow: hidden;
  display: flex;
  flex-direction: column;
  background: #fff;
  color: #333;
  font: 14px Roboto, "Noto Sans CJK TC", sans-serif;
  border-bottom: 1px solid #f8e0d0;
}
svg { display: block; flex: none; }
.defs { position: absolute; }

/* browser tabs */
.tabstrip {
  height: 34px;
  flex: none;
  display: flex;
  align-items: center;
  padding-left: 8px;
  background: #000;
  color: #f2f2f2;
  font: 12px "Open Sans", "Noto Sans CJK TC", sans-serif;
}
.tab {
  width: 239px;
  height: 34px;
  display: flex;
  align-items: center;
  gap: 8px;
  padding: 0 10px 0 12px;
}
.tab span { width: 175px; white-space: nowrap; overflow: hidden; letter-spacing: -0.05px; }
.tab .fav { width: 16px; height: 16px; }
.tab .close { width: 9px; height: 9px; margin-left: 4px; }
.tab.active { background: #2e2e2e; border-radius: 8px 8px 0 0; }
.tab.ruled { background: linear-gradient(#555, #555) 100% 50% / 1px 20px no-repeat; }
.tab .fade { -webkit-mask-image: linear-gradient(90deg, #000 88%, transparent); mask-image: linear-gradient(90deg, #000 88%, transparent); }
.newtab { width: 12px; height: 12px; margin-left: 17px; }
.winctl { margin-left: auto; display: flex; gap: 34px; padding: 0 17px 6px 0; }
.winctl svg { width: 12px; height: 12px; fill: none; stroke: #777; }

/* address bar */
.navbar {
  height: 37px;
  flex: none;
  display: flex;
  align-items: center;
  padding-left: 14px;
  background: #2e2e2e;
  border-bottom: 1px solid #555;
}
.nav { width: 16px; height: 16px; margin-right: 16px; fill: none; stroke-width: 1.8; }
.omni {
  width: 1704px;
  height: 28px;
  margin-left: -2px;
  display: flex;
  align-items: center;
  padding: 0 10px 0 13px;
  border-radius: 14px;
  background: #404040;
}
.url { margin: -2px 0 0 11px; color: #aaa; font: 14px "Open Sans", sans-serif; letter-spacing: 0.14px; white-space: nowrap; }
.url b { color: #fff; font-weight: 400; }
.omniicons { margin-left: auto; display: flex; gap: 16px; }
.omniicons svg { width: 16px; height: 16px; }
.side { width: 14px; height: 14px; margin-left: 15px; }
.face { width: 22px; height: 22px; margin-left: 14px; }
.dots { width: 4px; height: 16px; margin-left: 20px; }

/* document header */
.header { height: 40px; flex: none; display: flex; align-items: center; background: #f8f9fc; padding-left: 4px; }
.logo { width: 20px; height: 22px; }
.brand { width: 68px; margin: -3px 0 0 7px; font: 300 18px Inter, sans-serif; color: #444; letter-spacing: -0.3px; }
.burger { width: 16px; height: 16px; margin-left: 13px; }
.header h1 { width: 109px; margin: 2px 0 0 11px; font: 700 22.500px Roboto, sans-serif; color: #2b2b2b; }
.ws { width: 34px; margin: 5px 0 0 8px; font-size: 15.500px; color: #888; }
.link { width: 16px; height: 16px; margin-left: 15px; }
.cap { width: 16px; height: 16px; margin-left: 39px; }
.actions { margin-left: auto; display: flex; align-items: center; }
.btn {
  height: 33px;
  padding: 0 0 2px;
  margin-right: 8px;
  border: 1px solid #c8c8c8;
  border-radius: 4px;
  background: #fff;
  color: #333;
  font: 300 14px Roboto, "Noto Sans CJK TC", sans-serif;
}
.store { width: 107px; }
.learn { width: 79px; }
.share { width: 51px; background: #1651b0; border-color: #1651b0; color: #fff; margin-right: 10px; }
.help { width: 18px; height: 18px; margin-top: 2px; }
.caret { width: 8px; height: 5px; margin: 2px 10px 0 8px; }
.user { width: 24px; height: 24px; }
.uname { width: 45px; margin: -2px 0 0 6px; white-space: nowrap; font-size: 13.500px; font-weight: 300; }
.caret.last { margin: 0 5px 0 6px; }

/* workspace */
.workspace { flex: 1; min-height: 0; display: flex; }
.rail {
  width: 40px;
  flex: none;
  display: flex;
  flex-direction: column;
  align-items: center;
  gap: 12.500px;
  padding-top: 6px;
  background: #fafafa;
  border: solid #d0d0d0;
  border-width: 1px 1px 0 0;
}
.i22 { width: 22px; height: 22px; }
.rail .search { width: 19px; height: 18px; margin-top: auto; margin-bottom: 5px; }
.stage { flex: 1; min-width: 0; display: flex; flex-direction: column; }

.tools { height: 36px; flex: none; display: flex; align-items: center; }
.tools i { width: 34px; display: flex; justify-content: center; font-style: normal; }
.tools i:first-child { width: 35px; }
.tools svg { width: 23px; height: 23px; }
.tools b { width: 2px; height: 26px; margin: 0 1px; background: #d8d8d8; }
.tools .flip svg { transform: scaleX(-1); }
.tools .ins { width: 70px; justify-content: flex-start; align-items: center; padding-left: 6px; gap: 3px; white-space: nowrap; color: #555; font-size: 13.500px; font-weight: 300; }
.find {
  width: 126px;
  height: 33px;
  margin-left: 11px;
  display: flex;
  align-items: center;
  padding-left: 10px;
  border-radius: 4px;
  background: #ececec;
}
.find span { width: 68px; white-space: nowrap; font-size: 13.500px; font-weight: 300; }
.find kbd {
  height: 21px;
  margin: 1px 0 0 1px;
  padding: 0 2.500px;
  border: 1px solid #bbb;
  border-bottom-width: 2px;
  border-radius: 2px;
  font: 12.500px/19px Roboto, sans-serif;
}

.middle { flex: 1; min-height: 0; display: flex; }
.panel {
  width: 206px;
  flex: none;
  padding: 7px 0 0;
  border: solid #ccc;
  border-width: 1px 1px 1px 0;
}
.filter { height: 30px; display: flex; align-items: center; padding-left: 10px; }
.field {
  width: 122px;
  height: 30px;
  margin: 0 14px 0 13px;
  padding: 0 6px;
  border: 1px solid #c4c4c4;
  border-top-color: #999;
  border-radius: 3px;
  color: #999;
  font-size: 13.200px;
  font-style: italic;
  font-weight: 300;
  line-height: 28px;
}
.row { height: 26px; display: flex; align-items: center; }
.row span { white-space: nowrap; color: #444; letter-spacing: -0.2px; }
.row.head { height: 30px; justify-content: space-between; padding: 0 11px 0 5px; font-size: 13.500px; }
.row.head span { font-weight: 300; }
.row.head svg { margin-top: 3px; }
.row.asm { height: 27px; padding: 1px 0 0 5px; gap: 4px; }
.row.asm span, .row.lv span { padding-top: 1px; }
.row.asm span { letter-spacing: -0.35px; }
.i17 { width: 17px; height: 17px; }
.row.lv { padding-left: 25px; gap: 4px; }
.row.lv span { width: 62px; letter-spacing: -0.35px; }
.ax { width: 16px; height: 16px; }
.md { width: 8px; height: 19px; margin-left: 4px; }
.row.mates { height: 25px; padding-left: 4px; gap: 8px; font-size: 13px; font-weight: 300; }
.down { width: 12px; height: 12px; }
.kids {
  height: 105px;
  margin-left: 5px;
  background:
    linear-gradient(#ccc, #ccc) 4px 0 / 1px 105px no-repeat,
    linear-gradient(#ccc, #ccc) 0 100% / 9px 1px no-repeat;
}
.kids .row { padding-left: 18px; font-size: 13.300px; font-weight: 300; }
.kids .row span { color: #888; letter-spacing: 0; }
.chev { width: 12px; height: 12px; }
.rv { width: 19px; height: 19px; margin: 0 4px 0 8px; opacity: .5; }

.canvas { position: relative; flex: 1; min-width: 0; }
.model { width: 1674px; height: 855px; }
.cube { position: absolute; left: 1474px; top: 3px; width: 200px; height: 180px; }
.facetext { font: 9.500px "Noto Sans CJK TC", sans-serif; fill: #222; }
.ax3 { font: 12.500px Roboto, sans-serif; }
.flap {
  position: absolute;
  left: -1px;
  top: 402px;
  width: 33px;
  height: 34px;
  display: flex;
  align-items: center;
  justify-content: center;
  padding: 1px 2px 0 0;
  background: #fff;
  border: 1px solid #ccc;
  border-left: 0;
}
.dock { position: absolute; right: 0; top: 336px; width: 32px; border: solid #ccc; border-width: 1px 0 0 1px; background: #fff; }
.dock div { height: 33px; display: flex; justify-content: center; align-items: center; padding-top: 1px; border-bottom: 1px solid #ccc; }
.dock svg { width: 20px; height: 20px; }
.measure { position: absolute; right: 11px; bottom: 6px; display: flex; gap: 17px; }
.measure svg { width: 18px; height: 15px; }

/* sheet tabs */
.sheets { height: 30px; flex: none; display: flex; background: #d0d0d0; }
.add { width: 16px; height: 16px; margin: 7px 15px 0 8px; }
.sheet {
  width: 200px;
  height: 27px;
  margin-right: 2px;
  display: flex;
  align-items: center;
  gap: 4px;
  padding-left: 12px;
  border-radius: 0 0 4px 4px;
  background: #e8e8e8;
  color: #666;
  box-shadow: 0 1px 1px #aaa;
}
.sheet span { letter-spacing: -0.05px; }
.sheet.on { height: 28px; padding: 2px 0 0 11px; background: #fff; color: #444; border-bottom: 2px solid #1651b0; }
```
